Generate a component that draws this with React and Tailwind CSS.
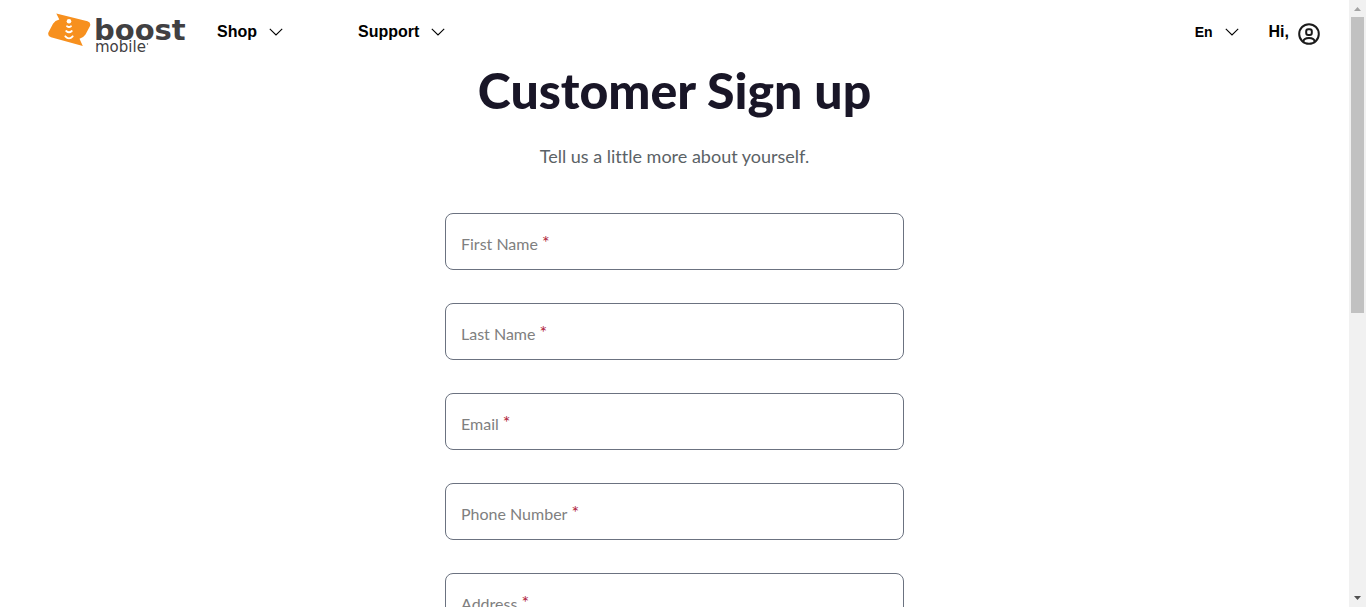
import React from "react";

const FIELDS = [
  { id: "firstName", label: "First Name", type: "text" },
  { id: "lastName", label: "Last Name", type: "text" },
  { id: "email", label: "Email", type: "email" },
  { id: "phone", label: "Phone Number", type: "tel" },
  { id: "address", label: "Address", type: "text" },
];

function Chevron({ className }) {
  return (
    <svg viewBox="0 0 14 8" className={className} fill="none" stroke="currentColor" strokeWidth="1.1" aria-hidden="true">
      <path d="M0.8 0.8 7 7 13.2 0.8" />
    </svg>
  );
}

function Logo() {
  return (
    <a href="#home" aria-label="boost mobile" className="block h-11 w-35 shrink-0">
      <svg viewBox="0 0 140 44" className="h-11 w-35">
        <path
          d="M8.300 .500 L39.500 8.300 Q43.200 9.500 42 13 L37.500 21.500 Q36 24 31.500 25.800 L34.800 32.900 L3 24.300 Q-.6 23 .4 19.500 L5 10.800 Q7 7.700 11.300 6.600 Z"
          fill="#f7901e"
        />
        <g fill="none" stroke="#fff" strokeWidth="1.800" strokeLinecap="round">
          <path d="M19 13.300 Q21 14.700 23 13.300" />
          <path d="M18.200 18 Q21 20.600 23.800 18" />
          <path d="M17.300 23.300 Q21 27.300 24.700 23.300" />
        </g>
        <circle cx="21" cy="8.300" r="2.300" fill="#fff" />
        <text x="46" y="27" fontSize="29" fill="#414042" className="font-['DejaVu_Sans',sans-serif] font-bold">boost</text>
        <text x="47" y="39" fontSize="15" fill="#414042" className="font-['DejaVu_Sans',sans-serif] font-normal">mobile</text>
        <circle cx="99.500" cy="31" r=".7" fill="#414042" />
      </svg>
    </a>
  );
}

function UserIcon() {
  return (
    <svg viewBox="0 0 22 22" className="mt-1 size-[22px]" fill="none" stroke="#1b1b1b" strokeWidth="2" aria-hidden="true">
      <circle cx="11" cy="11" r="9.800" />
      <rect x="8.200" y="6.200" width="5.600" height="5.800" rx="2" />
      <path d="M5.300 18.600 C5.600 15.600 7.500 15 11 15 S16.400 15.600 16.700 18.600" />
    </svg>
  );
}

function Header() {
  return (
    <header className="flex h-[66px] items-start justify-between pr-[29px] pl-12 font-['Liberation_Sans',Arial,sans-serif] font-bold text-black">
      <div className="flex items-start pt-[13px]">
        <Logo />
        <nav className="ml-[29px] flex gap-[75px] pt-[7px] text-base">
          <button type="button" className="flex items-center gap-3">
            Shop
            <Chevron className="h-2 w-3.5" />
          </button>
          <button type="button" className="flex items-center gap-3">
            Support
            <Chevron className="h-2 w-3.5" />
          </button>
        </nav>
      </div>
      <div className="flex items-center gap-[30px] pt-[19px]">
        <button type="button" className="flex items-center gap-3 text-sm">
          En
          <Chevron className="h-2 w-3.5" />
        </button>
        <button type="button" className="flex items-center gap-[9px] text-base">
          Hi,
          <UserIcon />
        </button>
      </div>
    </header>
  );
}

function Field({ id, label, type }) {
  return (
    <div className="flex h-[57px] shrink-0 items-center rounded-lg border border-[#6b7280] px-[15px] pt-1">
      <label htmlFor={id} className="flex shrink-0 gap-1 text-base text-[#808080]">
        {label}
        <span className="text-lg/5 text-[#b01e3a]">*</span>
      </label>
      <input id={id} name={id} type={type} required className="min-w-0 flex-1 bg-transparent pl-2 outline-none" />
    </div>
  );
}

function Scrollbar() {
  return (
    <div aria-hidden="true" className="flex w-[17px] shrink-0 flex-col items-center bg-[#f1f1f1]">
      <svg viewBox="0 0 17 17" className="size-[17px] shrink-0">
        <path d="M5 11h7L8.500 7z" fill="#a3a3a3" />
      </svg>
      <div className="flex w-[13px] flex-1 flex-col">
        <div className="h-[51.7%] bg-[#c1c1c1]" />
      </div>
      <svg viewBox="0 0 17 17" className="size-[17px] shrink-0">
        <path d="M5 6h7L8.500 10z" fill="#505050" />
      </svg>
    </div>
  );
}

export default function App() {
  return (
    <div className="flex h-screen overflow-hidden bg-white font-['Lato',sans-serif] [font-variant-ligatures:none]">
      <div className="min-w-0 flex-1 overflow-hidden">
        <Header />
        <main className="flex flex-col items-center px-4">
          <h1 className="text-[50px]/[48px] font-black text-[#191627]">Customer Sign up</h1>
          <p className="mt-7 text-lg text-[#5b6266]">Tell us a little more about yourself.</p>
          <form className="mt-[43px] flex w-full max-w-[459px] flex-col gap-[33px]">
            {FIELDS.map((field) => (
              <Field key={field.id} {...field} />
            ))}
          </form>
        </main>
      </div>
      <Scrollbar />
    </div>
  );
}
